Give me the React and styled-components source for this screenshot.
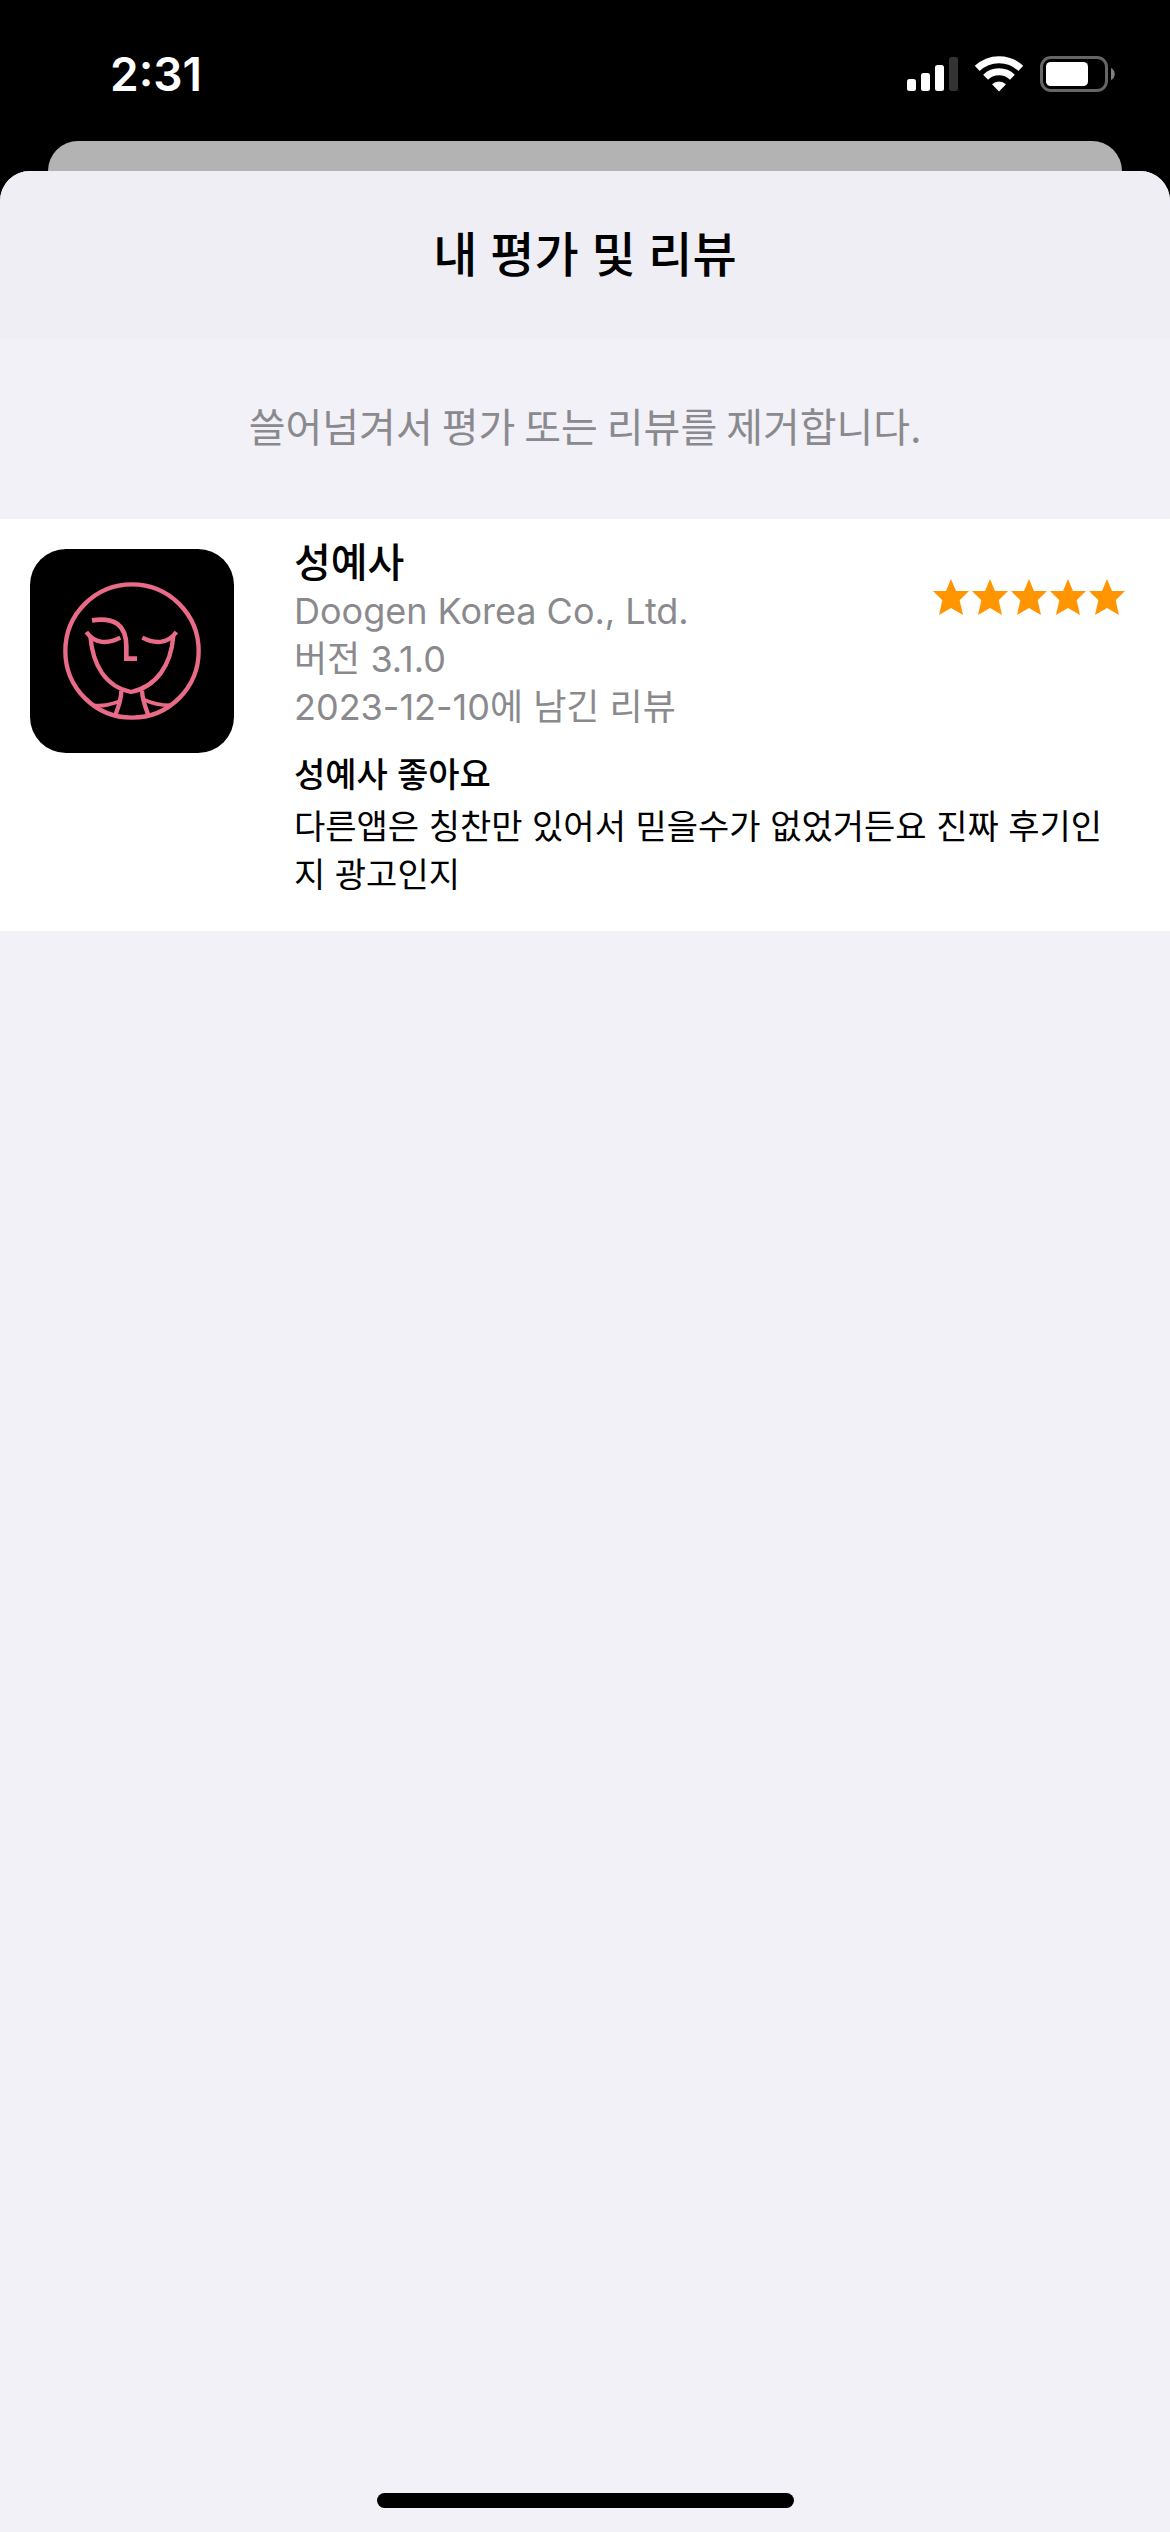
import styled, { createGlobalStyle } from "styled-components";

/* ================= styles ================= */

const GlobalStyle = createGlobalStyle`
  * { box-sizing: border-box; }

  body {
    margin: 0;
    background: #000;
    color: #000;
    font-family: Inter, "Noto Sans CJK KR", sans-serif;
  }
`;

const Screen = styled.div`
  min-height: 100vh;
  display: flex;
  flex-direction: column;
`;

const StatusBar = styled.div`
  height: 141px;
  padding: 6px 54px 0 110px;
  display: flex;
  align-items: center;
  justify-content: space-between;
  color: #fff;
`;

const Clock = styled.time`
  font-size: 46px;
  line-height: 56px;
  font-weight: 600;
`;

const StatusIcons = styled.div`
  display: flex;
  align-items: center;
  gap: 16px;
`;

const BackCard = styled.div`
  height: 30px;
  margin: 0 48px;
  background: #b3b3b3;
  border-radius: 30px 30px 0 0;
`;

const Sheet = styled.main`
  flex: 1;
  display: flex;
  flex-direction: column;
  background: #f2f1f7;
  border-radius: 30px 30px 0 0;
  overflow: hidden;
`;

const SheetHeader = styled.header`
  padding: 48px 30px;
  background: #efeef4;
`;

const Title = styled.h1`
  margin: 0;
  text-align: center;
  font-size: 48px;
  line-height: 72px;
  font-weight: 500;
`;

const Notice = styled.p`
  margin: 0;
  padding: 56px 30px 64px;
  text-align: center;
  font-family: "Noto Sans CJK KR", sans-serif;
  font-size: 40px;
  line-height: 60px;
  color: #8a8a8e;
`;

const ReviewList = styled.ul`
  margin: 0;
  padding: 0;
  list-style: none;
`;

const ReviewItem = styled.li`
  display: flex;
  align-items: flex-start;
  gap: 60px;
  padding: 30px 45px 32px 30px;
  background: #fff;
`;

const AppIcon = styled.svg`
  flex: none;
  width: 204px;
  height: 204px;
  border-radius: 36px;
  background: #000;
`;

const ReviewContent = styled.div`
  flex: 1;
  margin-top: -10px;
`;

const Summary = styled.div`
  display: flex;
  justify-content: space-between;
`;

const AppName = styled.h2`
  margin: 0;
  font-size: 40px;
  line-height: 48px;
  font-weight: 500;
`;

const Meta = styled.p`
  margin: 0;
  font-size: 36px;
  line-height: 48px;
  color: #8a8a8e;
`;

const Stars = styled.div`
  display: flex;
  gap: 3px;
  margin-top: 40px;
`;

const ReviewTitle = styled.h3`
  margin: 20px 0 4px;
  font-size: 34px;
  line-height: 48px;
  font-weight: 500;
`;

const ReviewBody = styled.p`
  margin: 0;
  font-size: 34px;
  line-height: 48px;
`;

const HomeArea = styled.div`
  margin-top: auto;
  padding: 24px 0;
  display: flex;
  justify-content: center;
`;

const HomeIndicator = styled.div`
  width: 417px;
  height: 15px;
  border-radius: 8px;
  background: #000;
`;

/* ================= icons ================= */

const SignalIcon = () => (
  <svg width="51" height="36" viewBox="0 0 51 36" fill="#fff" aria-hidden="true">
    <rect x="0" y="23" width="9" height="12" rx="2.5" />
    <rect x="14" y="17" width="9" height="18" rx="2.5" />
    <rect x="28" y="9" width="9" height="26" rx="2.5" />
    <rect x="42" y="1" width="9" height="34" rx="2.5" fill="#333" />
  </svg>
);

const WifiIcon = () => (
  <svg width="50" height="36" viewBox="0 0 50 36" fill="none" stroke="#fff" aria-hidden="true">
    <path d="M3.2 12.4 A31.5 31.5 0 0 1 46.8 12.4" strokeWidth="7" />
    <path d="M11.6 21.2 A19.3 19.3 0 0 1 38.4 21.2" strokeWidth="7" />
    <path d="M25 35.5 L18 28.2 A10.5 10.5 0 0 1 32 28.2 Z" fill="#fff" stroke="none" />
  </svg>
);

const BatteryIcon = () => (
  <svg width="76" height="36" viewBox="0 0 76 36" aria-hidden="true">
    <rect x="1.5" y="1.5" width="65" height="33" rx="9.5" fill="none" stroke="#666" strokeWidth="3" />
    <rect x="6" y="6" width="42" height="24" rx="4.5" fill="#fff" />
    <path d="M71 12 C76 14 76 22 71 24 Z" fill="#808080" />
  </svg>
);

const StarIcon = () => (
  <svg width="36" height="36" viewBox="0 0 108 108" fill="#ff9500" aria-hidden="true">
    <path d="M54 0 L69 36 H108 L80 64 L90 108 L54 87 L18 108 L28 64 L0 36 H39 Z" />
  </svg>
);

const FaceIcon = () => (
  <AppIcon viewBox="30 57 612 612" fill="none" stroke="#ea6b87" strokeWidth="13" role="img" aria-label="성예사">
    <circle cx="336" cy="363" r="200" />
    <path d="M216 271 C284 262 319 284 319 350 V386 H351" strokeWidth="14" />
    <path d="M199 306 C225 343 265 342 301 323" />
    <path d="M367 323 C403 342 443 343 469 306" />
    <path d="M211 318 C218 405 256 470 333 486 C410 470 453 405 460 318" />
    <path d="M304 482 C304 510 295 532 286 555" />
    <path d="M366 482 C367 510 376 532 385 555" />
    <path d="M220 526 C250 530 275 522 300 514" strokeWidth="11" />
    <path d="M370 508 C395 520 425 526 452 526" strokeWidth="11" />
  </AppIcon>
);

/* ================= page ================= */

const reviews = [
  {
    id: 1,
    app: "성예사",
    seller: "Doogen Korea Co., Ltd.",
    version: "3.1.0",
    date: "2023-12-10",
    rating: 5,
    title: "성예사 좋아요",
    body: "다른앱은 칭찬만 있어서 믿을수가 없었거든요 진짜 후기인지 광고인지",
  },
];

const Review = ({ review }) => (
  <ReviewItem>
    <FaceIcon />
    <ReviewContent>
      <Summary>
        <div>
          <AppName>{review.app}</AppName>
          <Meta>{review.seller}</Meta>
          <Meta>버전 {review.version}</Meta>
          <Meta>{review.date}에 남긴 리뷰</Meta>
        </div>
        <Stars role="img" aria-label={`별점 ${review.rating}점`}>
          {Array.from({ length: review.rating }, (_, i) => (
            <StarIcon key={i} />
          ))}
        </Stars>
      </Summary>
      <ReviewTitle>{review.title}</ReviewTitle>
      <ReviewBody>{review.body}</ReviewBody>
    </ReviewContent>
  </ReviewItem>
);

const App = () => {
  return (
    <>
      <GlobalStyle />
      <Screen>
        <StatusBar>
          <Clock>2:31</Clock>
          <StatusIcons>
            <SignalIcon />
            <WifiIcon />
            <BatteryIcon />
          </StatusIcons>
        </StatusBar>
        <BackCard />

        <Sheet>
          <SheetHeader>
            <Title>내 평가 및 리뷰</Title>
          </SheetHeader>
          <Notice>쓸어넘겨서 평가 또는 리뷰를 제거합니다.</Notice>
          <ReviewList>
            {reviews.map((review) => (
              <Review key={review.id} review={review} />
            ))}
          </ReviewList>
          <HomeArea>
            <HomeIndicator />
          </HomeArea>
        </Sheet>
      </Screen>
    </>
  );
};

export default App;
